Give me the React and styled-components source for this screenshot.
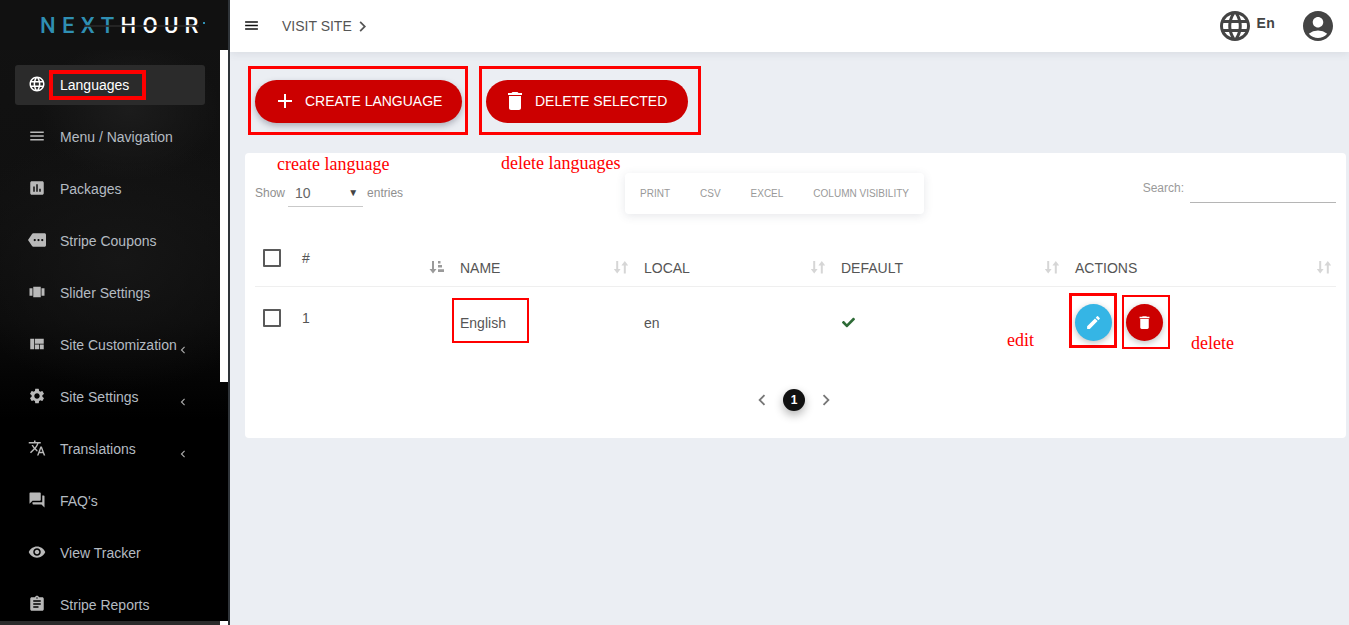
import React from "react";
import styled, { createGlobalStyle } from "styled-components";
import { FaCheck } from "react-icons/fa";
import {
  MdLanguage,
  MdMenu,
  MdAssessment,
  MdMore,
  MdViewCarousel,
  MdViewQuilt,
  MdSettings,
  MdTranslate,
  MdForum,
  MdVisibility,
  MdAssignment,
  MdAdd,
  MdDelete,
  MdEdit,
  MdAccountCircle,
  MdChevronLeft,
  MdChevronRight,
} from "react-icons/md";

const GlobalStyle = createGlobalStyle`
  html, body {
    margin: 0;
    height: 100%;
    overflow: hidden;
    background: #ebeef3;
    font-family: "Liberation Sans", Arial, sans-serif;
  }
  * { box-sizing: border-box; }
`;

const Shell = styled.div`
  display: flex;
  width: 1349px;
  height: 625px;
  overflow: hidden;
`;

const Sidebar = styled.aside`
  position: relative;
  flex: 0 0 230px;
  height: 625px;
  border-right: 2px solid #2f3439;
  background:
    radial-gradient(ellipse 90px 70px at 130px 110px, #1c1c1c 0%, rgba(28, 28, 28, 0) 100%),
    radial-gradient(ellipse 170px 130px at 120px 260px, #161616 0%, rgba(22, 22, 22, 0) 100%),
    linear-gradient(#121212 0, #101010 200px, #0b0b0b 320px, #000 420px);
`;

const LogoBar = styled.div`
  height: 50px;
  background: #111;
  display: flex;
  align-items: center;
  padding: 1px 0 0 40px;
`;

const Logo = styled.div`
  position: relative;
  font-family: Roboto, sans-serif;
  font-size: 22px;
  line-height: 22px;
  letter-spacing: 6.3px;
  font-weight: 500;
  color: #fff;
  white-space: nowrap;
  span { color: #2f8fb3; }
  &::before {
    content: "";
    position: absolute;
    right: 0;
    top: 7px;
    width: 2px;
    height: 2px;
    background: #2f8fb3;
  }
  &::after {
    content: "";
    position: absolute;
    left: 44px;
    right: 6px;
    top: 10px;
    height: 2px;
    background: rgba(40, 40, 40, 0.85);
  }
`;

const Nav = styled.nav`
  display: flex;
  flex-direction: column;
  gap: 12px;
  padding: 15px 23px 0 15px;
`;

const NavItem = styled.div`
  position: relative;
  display: flex;
  align-items: center;
  height: 40px;
  flex: none;
  padding-left: 13px;
  border-radius: 3px;
  font-size: 14px;
  white-space: nowrap;
  color: ${(p) => (p.$active ? "#fff" : "#b4bbc2")};
  background: ${(p) => (p.$active ? "#2b2b2b" : "transparent")};
  svg.lead {
    flex: none;
    width: 18px;
    height: 18px;
    margin: -2px 14px 0 0;
    color: ${(p) => (p.$active ? "#fff" : "#b9b9b9")};
  }
`;

const NavCaret = styled(MdChevronLeft)`
  position: absolute;
  left: 161px;
  top: 18px;
  width: 14px;
  height: 14px;
  color: #a9a9a9;
`;

const NavMark = styled.span`
  position: absolute;
  left: 34px;
  top: 5px;
  width: 97px;
  height: 30px;
  border: 4px solid #f00;
`;

const ScrollThumb = styled.div`
  position: absolute;
  left: 220px;
  top: 50px;
  width: 8px;
  height: 332px;
  background: #fff;
`;

const BottomScroll = styled.div`
  position: absolute;
  left: 0;
  bottom: 0;
  width: 228px;
  height: 4px;
  background: #2b2b2b;
  &::after {
    content: "";
    position: absolute;
    right: 0;
    top: 0;
    width: 8px;
    height: 4px;
    background: #fff;
  }
`;

const Main = styled.main`
  flex: 1;
  min-width: 0;
  display: flex;
  flex-direction: column;
`;

const TopBar = styled.header`
  flex: none;
  height: 52px;
  display: flex;
  align-items: center;
  padding: 0 16px 0 13px;
  background: #fff;
  box-shadow: 0 2px 8px rgba(60, 70, 90, 0.1);
  color: #4a4a4a;
`;

const BurgerIcon = styled(MdMenu)`
  width: 17px;
  height: 17px;
  color: #111;
  margin-top: -2px;
`;

const VisitLink = styled.span`
  display: flex;
  align-items: center;
  margin-left: 22px;
  font-size: 14px;
  color: #555;
  svg {
    width: 21px;
    height: 21px;
  }
`;

const TopRight = styled.div`
  margin-left: auto;
  display: flex;
  align-items: center;
`;

const LangCode = styled.span`
  font-size: 14px;
  font-weight: 700;
  letter-spacing: 0.3px;
  color: #444;
  margin: -6px 25px 0 7px;
`;

const GlobeIcon = styled(MdLanguage)`
  width: 36px;
  height: 36px;
  color: #444;
  margin-right: -3px;
`;

const UserIcon = styled(MdAccountCircle)`
  width: 36px;
  height: 36px;
  color: #444;
  margin-right: -3px;
`;

const Toolbar = styled.div`
  display: flex;
  gap: 11px;
  margin: 14px 0 18px 18px;
`;

const ButtonFrame = styled.div`
  border: 3px solid #f00;
  padding: 11px ${(p) => p.$right}px ${(p) => p.$bottom}px 4px;
`;

const PillButton = styled.button`
  display: flex;
  align-items: center;
  height: 43px;
  width: ${(p) => p.$width}px;
  padding: 0 0 2px ${(p) => p.$pad}px;
  border: 0;
  border-radius: 22px;
  background: #cc0000;
  color: #fff;
  font: 400 14px "Liberation Sans", Arial, sans-serif;
  text-transform: uppercase;
  white-space: nowrap;
  box-shadow: ${(p) => (p.$raised ? "0 3px 6px rgba(60, 60, 80, 0.35)" : "none")};
  svg {
    width: 24px;
    height: 24px;
    margin-right: 8px;
  }
`;

const Panel = styled.section`
  position: relative;
  margin: 0 3px 0 15px;
  height: 285px;
  padding: 20px 10px 0;
  border-radius: 4px;
  background: #fff;
`;

const Note = styled.span`
  position: absolute;
  left: ${(p) => p.$x}px;
  top: ${(p) => p.$y}px;
  font: 18px "Liberation Serif", serif;
  color: #f00;
  white-space: nowrap;
`;

const Controls = styled.div`
  display: flex;
  align-items: flex-start;
  height: 41px;
`;

const LengthGroup = styled.div`
  flex: 0 0 370px;
  display: flex;
  align-items: center;
  gap: 4px;
  padding-top: 6px;
  font-size: 12px;
  color: #8f8f8f;
`;

const LengthSelect = styled.div`
  display: flex;
  justify-content: space-between;
  align-items: center;
  width: 75px;
  height: 28px;
  margin-left: -1px;
  padding: 0 5px 0 7px;
  border-bottom: 1px solid #c9c9c9;
  font-size: 14px;
  color: #666;
  i {
    font-style: normal;
    font-size: 10px;
    color: #444;
  }
`;

const ExportBox = styled.div`
  display: flex;
  align-items: center;
  gap: 30px;
  height: 41px;
  padding: 0 15px;
  border-radius: 4px;
  background: #fff;
  box-shadow: 0 2px 10px rgba(60, 70, 90, 0.13);
  font-size: 10px;
  color: #999;
  white-space: nowrap;
`;

const SearchGroup = styled.label`
  margin-left: auto;
  display: flex;
  align-items: flex-start;
  gap: 6px;
  font-size: 12px;
  color: #9a9a9a;
  span { padding-top: 8px; }
`;

const SearchInput = styled.div`
  width: 146px;
  height: 30px;
  border-bottom: 1px solid #b5b5b5;
`;

const Table = styled.table`
  width: 100%;
  table-layout: fixed;
  border-collapse: collapse;
  margin-top: 20px;
  font-size: 14px;
  color: #555;
`;

const HeadCell = styled.th`
  position: relative;
  height: 52px;
  padding: ${(p) => (p.$top ? "0 0 4px 11px" : "16px 0 0 11px")};
  width: ${(p) => p.$width}px;
  border-bottom: 1px solid #efefef;
  text-align: left;
  font-weight: 400;
  color: #555;
  svg.sort {
    position: absolute;
    right: 4px;
    top: 25px;
  }
`;

const BodyCell = styled.td`
  height: 66px;
  padding: ${(p) => p.$top}px 0 ${(p) => p.$bottom}px 11px;
`;

const CheckBox = styled.span`
  display: block;
  width: 18px;
  height: 18px;
  margin-left: -3px;
  border: 2px solid #5a5a5a;
  border-radius: 1px;
`;

const NameFrame = styled.span`
  display: inline-block;
  margin-left: -8px;
  padding: 15px 21px 10px 6px;
  border: 2px solid #f00;
`;

const DefaultMark = styled(FaCheck)`
  width: 13px;
  height: 13px;
  margin-left: 1px;
  color: #2e6b37;
  vertical-align: middle;
`;

const Actions = styled.div`
  display: flex;
  align-items: flex-start;
  gap: 5px;
  margin-left: -6px;
`;

const ActionFrame = styled.div`
  border: ${(p) => (p.$blue ? 3 : 2)}px solid #f00;
  padding: ${(p) => (p.$blue ? "8px 2px 4px 3px" : "7px 5px 6px 2px")};
  margin-top: ${(p) => (p.$blue ? 0 : 2)}px;
`;

const RoundButton = styled.button`
  display: flex;
  align-items: center;
  justify-content: center;
  width: 37px;
  height: 37px;
  padding: 0;
  border: 0;
  border-radius: 50%;
  color: #fff;
  background: ${(p) => (p.$blue ? "#35b5e5" : "#cc0000")};
  box-shadow: 0 2px 6px rgba(0, 0, 0, 0.25);
  svg {
    width: 17px;
    height: 17px;
  }
`;

const Pager = styled.div`
  display: flex;
  justify-content: center;
  align-items: center;
  gap: 10px;
  margin-top: 37px;
  padding-right: 3px;
  color: #777;
  svg {
    width: 22px;
    height: 22px;
  }
`;

const PageBadge = styled.span`
  width: 22px;
  height: 22px;
  border-radius: 50%;
  display: flex;
  align-items: center;
  justify-content: center;
  background: #111;
  color: #fff;
  font-size: 12px;
  font-weight: 700;
  box-shadow: 0 4px 10px rgba(0, 0, 0, 0.3);
`;

function SortIcon({ active }) {
  const c = active ? "#9a9a9a" : "#d6d6d6";
  if (active) {
    return (
      <svg className="sort" width="16" height="16" viewBox="0 0 16 16" fill={c}>
        <path d="M3 2h2v8h2.5L4 14.5.5 10H3z" />
        <path d="M9 2h2.5v2.4H9zM9 6h4v2.6H9zM9 10.3h6V13H9z" />
      </svg>
    );
  }
  return (
    <svg className="sort" width="16" height="16" viewBox="0 0 16 16" fill={c}>
      <path d="M3.2 2h2v8h2.4L4.2 14.5.8 10h2.4z" />
      <path d="M10.8 14.5h2v-8h2.4L11.8 2 8.4 6.5h2.4z" />
    </svg>
  );
}

const menu = [
  { label: "Languages", icon: MdLanguage, active: true },
  { label: "Menu / Navigation", icon: MdMenu },
  { label: "Packages", icon: MdAssessment },
  { label: "Stripe Coupons", icon: MdMore },
  { label: "Slider Settings", icon: MdViewCarousel },
  { label: "Site Customization", icon: MdViewQuilt, caret: true },
  { label: "Site Settings", icon: MdSettings, caret: true },
  { label: "Translations", icon: MdTranslate, caret: true },
  { label: "FAQ's", icon: MdForum },
  { label: "View Tracker", icon: MdVisibility },
  { label: "Stripe Reports", icon: MdAssignment },
];

export default function App() {
  return (
    <Shell>
      <GlobalStyle />
      <Sidebar>
        <LogoBar>
          <Logo>
            <span>NEXT</span>HOUR
          </Logo>
        </LogoBar>
        <Nav>
          {menu.map(({ label, icon: Icon, active, caret }) => (
            <NavItem key={label} $active={active}>
              <Icon className="lead" />
              {label}
              {active && <NavMark />}
              {caret && <NavCaret />}
            </NavItem>
          ))}
        </Nav>
        <ScrollThumb />
        <BottomScroll />
      </Sidebar>
      <Main>
        <TopBar>
          <BurgerIcon />
          <VisitLink>
            VISIT SITE <MdChevronRight />
          </VisitLink>
          <TopRight>
            <GlobeIcon />
            <LangCode>En</LangCode>
            <UserIcon />
          </TopRight>
        </TopBar>
        <Toolbar>
          <ButtonFrame $right={3} $bottom={8}>
            <PillButton $width={207} $pad={18} $raised>
              <MdAdd />
              Create Language
            </PillButton>
          </ButtonFrame>
          <ButtonFrame $right={10} $bottom={9}>
            <PillButton $width={202} $pad={17}>
              <MdDelete />
              Delete Selected
            </PillButton>
          </ButtonFrame>
        </Toolbar>
        <Panel>
          <Note $x={32} $y={1}>create language</Note>
          <Note $x={256} $y={0}>delete languages</Note>
          <Note $x={762} $y={177}>edit</Note>
          <Note $x={946} $y={180}>delete</Note>
          <Controls>
            <LengthGroup>
              Show
              <LengthSelect>
                10 <i>▼</i>
              </LengthSelect>
              entries
            </LengthGroup>
            <ExportBox>
              <span>PRINT</span>
              <span>CSV</span>
              <span>EXCEL</span>
              <span>COLUMN VISIBILITY</span>
            </ExportBox>
            <SearchGroup>
              <span>Search:</span>
              <SearchInput />
            </SearchGroup>
          </Controls>
          <Table>
            <thead>
              <tr>
                <HeadCell $width={36} $top>
                  <CheckBox />
                </HeadCell>
                <HeadCell $width={158} $top>
                  #
                  <SortIcon active />
                </HeadCell>
                <HeadCell $width={184}>
                  NAME
                  <SortIcon />
                </HeadCell>
                <HeadCell $width={197}>
                  LOCAL
                  <SortIcon />
                </HeadCell>
                <HeadCell $width={234}>
                  DEFAULT
                  <SortIcon />
                </HeadCell>
                <HeadCell>
                  ACTIONS
                  <SortIcon />
                </HeadCell>
              </tr>
            </thead>
            <tbody>
              <tr>
                <BodyCell $top={0} $bottom={2}>
                  <CheckBox />
                </BodyCell>
                <BodyCell $top={0} $bottom={2}>1</BodyCell>
                <BodyCell $top={2} $bottom={0}>
                  <NameFrame>English</NameFrame>
                </BodyCell>
                <BodyCell $top={8} $bottom={0}>en</BodyCell>
                <BodyCell $top={4} $bottom={0}>
                  <DefaultMark />
                </BodyCell>
                <BodyCell $top={4} $bottom={0}>
                  <Actions>
                    <ActionFrame $blue>
                      <RoundButton $blue>
                        <MdEdit />
                      </RoundButton>
                    </ActionFrame>
                    <ActionFrame>
                      <RoundButton>
                        <MdDelete />
                      </RoundButton>
                    </ActionFrame>
                  </Actions>
                </BodyCell>
              </tr>
            </tbody>
          </Table>
          <Pager>
            <MdChevronLeft />
            <PageBadge>1</PageBadge>
            <MdChevronRight />
          </Pager>
        </Panel>
      </Main>
    </Shell>
  );
}
